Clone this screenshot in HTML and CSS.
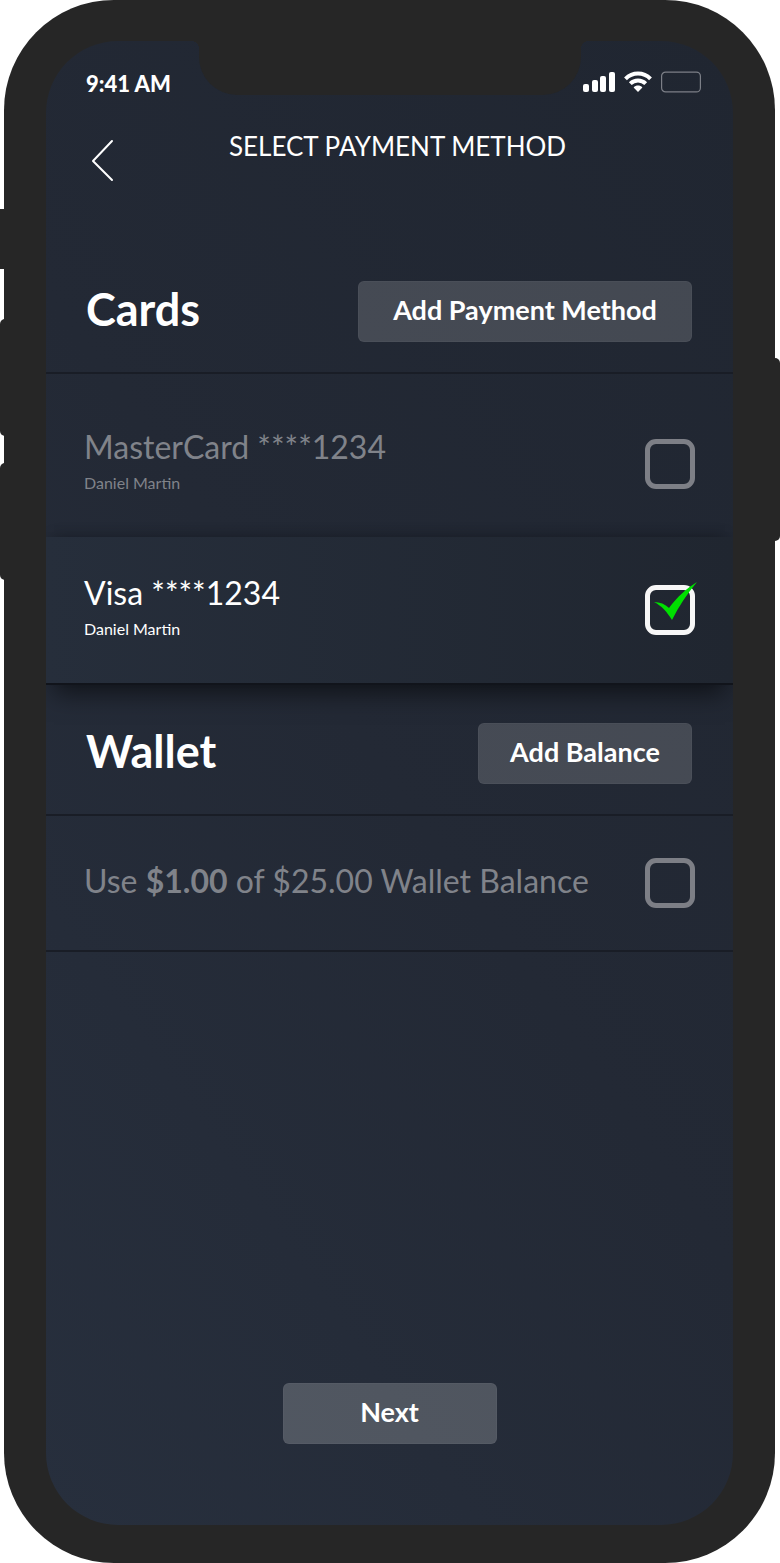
FILE: index.html
```html
<!DOCTYPE html>
<html lang="en">
<head>
  <meta charset="UTF-8">
  <meta name="viewport" content="width=device-width, initial-scale=1.0">
  <title>Select Payment Method</title>
  <link rel="stylesheet" href="styles.css">
</head>
<body>

<div class="phone">
  <!-- Hardware buttons on the edges -->
  <span class="key key-mute"></span>
  <span class="key key-up"></span>
  <span class="key key-down"></span>
  <span class="key key-power"></span>

  <div class="screen">
    <div class="notch"></div>

    <div class="status">
      <span class="time">9:41 AM</span>
      <div class="status-icons">
        <svg width="32" height="22" viewBox="0 0 32 22" fill="#fff">
          <rect x="0" y="13" width="6" height="8" rx="2"/>
          <rect x="9" y="9" width="6" height="12" rx="2"/>
          <rect x="17" y="5" width="6" height="16" rx="2"/>
          <rect x="26" y="1" width="6" height="20" rx="2"/>
        </svg>
        <svg width="28" height="22" viewBox="0 0 28 22" fill="none" stroke="#fff" stroke-width="4">
          <path d="M1.5 7.8C8.5 .8 19.5 .8 26.5 7.8"/>
          <path d="M6.3 12.6C10.6 8.4 17.4 8.4 21.7 12.6"/>
          <path d="M9.6 16.4C12 14 16 14 18.4 16.4L14 21Z" fill="#fff" stroke="none"/>
        </svg>
        <svg width="40" height="22" viewBox="0 0 40 22" fill="none" stroke="#7c7f87">
          <rect x=".6" y="1.1" width="38.8" height="19.8" rx="4" stroke-width="1.2"/>
        </svg>
      </div>
    </div>

    <header class="topbar">
      <a class="back" href="#" aria-label="Back">
        <svg width="23" height="43" viewBox="0 0 23 43" fill="none" stroke="#fff" stroke-width="2" stroke-linecap="round" stroke-linejoin="round">
          <path d="M21 2L2 22L21 41"/>
        </svg>
      </a>
      <h1 class="title">SELECT PAYMENT METHOD</h1>
    </header>

    <main class="content">
      <div class="section-head">
        <h2>Cards</h2>
        <button class="btn btn-wide" type="button">Add Payment Method</button>
      </div>

      <label class="row row-tall">
        <span class="row-text">
          <span class="card-name">MasterCard ****1234</span>
          <span class="holder">Daniel Martin</span>
        </span>
        <span class="check">
          <input type="checkbox" name="mastercard">
          <svg class="tick" viewBox="0 0 50 50"><path d="M9 17C15 17 20 19 24 23C32 12 42 3 52-3C42 9 34 21 27 35C22 27 17 21 9 17Z"/></svg>
        </span>
      </label>

      <label class="row row-card">
        <span class="row-text">
          <span class="card-name">Visa ****1234</span>
          <span class="holder">Daniel Martin</span>
        </span>
        <span class="check">
          <input type="checkbox" name="visa" checked>
          <svg class="tick" viewBox="0 0 50 50"><path d="M9 17C15 17 20 19 24 23C32 12 42 3 52-3C42 9 34 21 27 35C22 27 17 21 9 17Z"/></svg>
        </span>
      </label>

      <div class="section-head">
        <h2>Wallet</h2>
        <button class="btn" type="button">Add Balance</button>
      </div>

      <label class="row">
        <span class="card-name">Use <b>$1.00</b> of $25.00 Wallet Balance</span>
        <span class="check">
          <input type="checkbox" name="wallet">
          <svg class="tick" viewBox="0 0 50 50"><path d="M9 17C15 17 20 19 24 23C32 12 42 3 52-3C42 9 34 21 27 35C22 27 17 21 9 17Z"/></svg>
        </span>
      </label>
    </main>

    <footer class="actions">
      <button class="btn btn-next" type="button">Next</button>
    </footer>
  </div>
</div>

</body>
</html>
```

FILE: styles.css
```css
* { box-sizing: border-box; margin: 0; padding: 0; }

body {
  display: flex;
  min-height: 100vh;
  background: #fff;
  font-family: Lato, "Liberation Sans", sans-serif;
  color: #fff;
}

.phone {
  position: relative;
  display: flex;
  flex: 1;
  margin: 0 5px 0 4px;
  padding: 41px 42px 38px;
  background: #262626;
  border-radius: 110px;
}

.key {
  position: absolute;
  left: -4px;
  width: 8px;
  background: #262626;
  border-radius: 5px 0 0 5px;
}

.key-mute { top: 209px; height: 60px; border-radius: 0; }
.key-up   { top: 319px; height: 117px; }
.key-down { top: 463px; height: 117px; }

.key-power {
  top: 358px;
  left: auto;
  right: -5px;
  height: 183px;
  border-radius: 0 5px 5px 0;
}

.screen {
  position: relative;
  display: flex;
  flex: 1;
  flex-direction: column;
  min-width: 0;
  background: linear-gradient(235deg, #202631, #232935 50%, #272f3d);
  border-radius: 72px;
}

.notch {
  position: absolute;
  top: 0;
  left: 50%;
  width: 382px;
  height: 54px;
  transform: translateX(-50%);
  background: #262626;
  border-radius: 0 0 38px 38px;
}

.notch::before,
.notch::after {
  content: "";
  position: absolute;
  top: 0;
  left: -8px;
  width: 8px;
  height: 8px;
  background: radial-gradient(circle at 0 100%, transparent 8px, #262626 8px);
}

.notch::after {
  left: 100%;
  background: radial-gradient(circle at 100% 100%, transparent 8px, #262626 8px);
}

.status {
  display: flex;
  justify-content: space-between;
  align-items: flex-start;
  padding: 30px 32px 0 40px;
}

.time {
  font-size: 22px;
  font-weight: 900;
  line-height: 26px;
}

.status-icons {
  display: flex;
  align-items: center;
  gap: 9px;
}

.topbar {
  display: grid;
  grid-template-columns: 28px 1fr 28px;
  align-items: start;
  padding: 36px 29px 0 45px;
}

.back {
  margin-top: 6px;
}

.back svg { display: block; }

.title {
  text-align: center;
  font-size: 26px;
  font-weight: 400;
  line-height: 26px;
}

.content {
  padding-top: 61px;
}

.section-head {
  display: flex;
  justify-content: space-between;
  align-items: center;
  padding: 38px 41px 30px 40px;
  border-bottom: 2px solid #191d26;
}

h2 {
  padding-bottom: 6px;
  font-size: 45px;
  font-weight: 700;
  line-height: 50px;
}

.btn {
  width: 214px;
  height: 61px;
  padding-bottom: 4px;
  border: 1px solid rgba(255, 255, 255, 0.03);
  border-radius: 6px;
  background: rgba(255, 255, 255, 0.16);
  color: #fff;
  font: inherit;
  font-size: 27px;
  font-weight: 700;
  cursor: pointer;
}

.btn-wide { width: 334px; }
.btn-next { background: rgba(255, 255, 255, 0.2); }

.row {
  display: flex;
  justify-content: space-between;
  align-items: center;
  padding: 42px 38px;
  border-bottom: 2px solid #191d26;
  color: #80838a;
  cursor: pointer;
}

.row > .card-name { padding-bottom: 4px; }

.row-tall {
  padding: 65px 38px 48px;
  border-bottom: 0;
}

.row-card {
  position: relative;
  padding: 48px 38px;
  background: linear-gradient(90deg, #262e3b, #202630);
  border-bottom-color: #11141b;
  color: #fff;
  box-shadow: 0 16px 24px -8px rgba(0, 0, 0, 0.55), 0 -6px 14px -8px rgba(0, 0, 0, 0.4);
  clip-path: inset(-20px 0 -40px 0);
}

.row-text {
  display: flex;
  flex-direction: column;
  margin: -12px 0 -10px;
}

.card-name {
  font-size: 32px;
  line-height: 40px;
}

.holder {
  font-size: 16px;
  line-height: 32px;
}

.check {
  position: relative;
  flex: none;
  width: 50px;
  height: 50px;
}

.check input {
  display: block;
  width: 50px;
  height: 50px;
  appearance: none;
  border: 5px solid #7d7f86;
  border-radius: 11px;
  cursor: pointer;
}

.check input:checked { border-color: #f7f7f7; }

.tick {
  position: absolute;
  inset: 0;
  overflow: visible;
  fill: #00e000;
  pointer-events: none;
  visibility: hidden;
}

.check input:checked + .tick { visibility: visible; }

.actions {
  margin-top: auto;
  padding-bottom: 81px;
  text-align: center;
}
```
